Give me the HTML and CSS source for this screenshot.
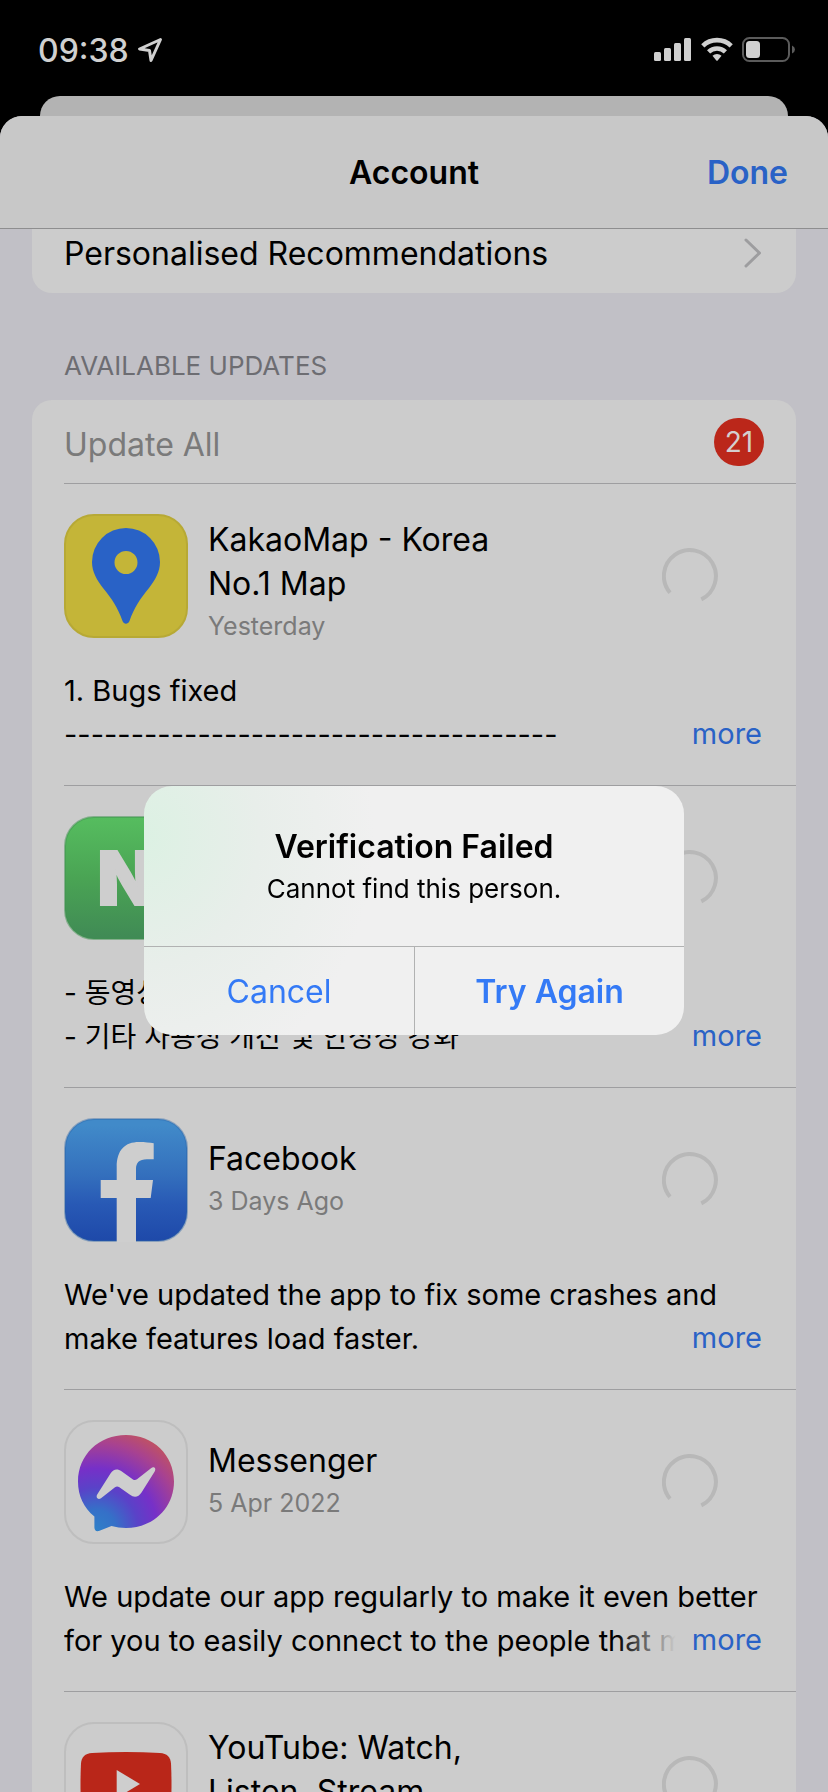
FILE: index.html
```html
<!DOCTYPE html>
<html lang="en">
<head>
<meta charset="utf-8">
<meta name="viewport" content="width=device-width, initial-scale=1">
<title>Account</title>
<link rel="stylesheet" href="styles.css">
</head>
<body>
<div class="screen">
  <div class="status">
    <div class="status-left">
      <span class="clock">09:38</span>
      <svg class="location" width="26" height="26" viewBox="0 0 26 26" aria-hidden="true"><path d="M23.500 2.500L2.500 12L12.500 13.500L14 23.500Z" fill="none" stroke="#d0d0d0" stroke-width="3" stroke-linejoin="round"/></svg>
    </div>
    <div class="status-right">
      <svg width="38" height="26" viewBox="0 0 38 26" aria-hidden="true" fill="#d0d0d0"><rect x="0" y="15" width="7" height="9" rx="1.500"/><rect x="10" y="11" width="7" height="13" rx="1.500"/><rect x="20" y="6" width="7" height="18" rx="1.500"/><rect x="30" y="1" width="7" height="23" rx="1.500"/></svg>
      <svg width="32" height="26" viewBox="0 0 32 26" aria-hidden="true"><g fill="none" stroke="#d0d0d0" stroke-width="4.600"><path d="M1.800 8.800A20.500 20.500 0 0 1 30.200 8.800"/><path d="M7.600 14.800A12.200 12.200 0 0 1 24.400 14.800"/></g><path d="M11.500 18.800A6.500 6.500 0 0 1 20.500 18.800L16.700 23.500Q16 24.200 15.300 23.500Z" fill="#d0d0d0"/></svg>
      <svg width="54" height="26" viewBox="0 0 54 26" aria-hidden="true"><rect x="1" y="1" width="46" height="23" rx="6.500" fill="none" stroke="#5b5b5b" stroke-width="2"/><rect x="4" y="4" width="14" height="17" rx="3.500" fill="#d0d0d0"/><path d="M50 8.500Q53 10 53 12.500Q53 15 50 16.500Z" fill="#5b5b5b"/></svg>
    </div>
  </div>
  <div class="back-sheet"></div>
  <div class="sheet">
    <header class="nav">
      <h1 class="nav-title">Account</h1>
      <button class="nav-done" type="button">Done</button>
    </header>
    <main class="content">
      <a class="card card-link" href="#recommendations">
        <span>Personalised Recommendations</span>
        <svg width="18" height="30" viewBox="0 0 18 30" aria-hidden="true"><path d="M2 2L15.500 15L2 28" fill="none" stroke="#9d9d9f" stroke-width="3" stroke-linecap="round" stroke-linejoin="round"/></svg>
      </a>
      <h2 class="section-title">AVAILABLE UPDATES</h2>
      <section class="card">
        <div class="update-all">
          <button class="update-all-button" type="button" disabled>Update All</button>
          <span class="badge">21</span>
        </div>
        <article class="app">
          <div class="app-head">
            <svg class="app-icon" viewBox="0 0 124 124" aria-hidden="true"><rect x="1" y="1" width="122" height="122" rx="29" fill="#c4b538" stroke="#b7a935" stroke-width="2"/><path fill-rule="evenodd" d="M28 48A34 34 0 0 1 96 48C96 58 91 66 85 74C76 85 70 94 65.500 107C64 110.500 60 110.500 58.500 107C54 94 48 85 39 74C33 66 28 58 28 48ZM50.500 48.500A11.500 11.500 0 1 0 73.500 48.500A11.500 11.500 0 1 0 50.500 48.500Z" fill="#2962c6"/></svg>
            <div class="app-info app-info-long"><h3 class="app-name">KakaoMap - Korea<br>No.1 Map</h3><p class="app-date">Yesterday</p></div>
            <svg class="spinner" viewBox="0 0 56 56" role="img" aria-label="Loading"><path d="M8 44.800A26 26 0 1 1 39.300 51.400" fill="none" stroke="#b8b8b8" stroke-width="4"/></svg>
          </div>
          <div class="notes"><p class="notes-text">1. Bugs fixed<br>-------------------------------------</p><button class="more" type="button">more</button></div>
        </article>
        <article class="app">
          <div class="app-head">
            <svg class="app-icon" viewBox="0 0 124 124" aria-hidden="true"><defs><linearGradient id="green" x2="0" y2="1"><stop stop-color="#56bd5f"/><stop offset=".5" stop-color="#4aa454"/><stop offset="1" stop-color="#408a55"/></linearGradient></defs><rect x="1" y="1" width="122" height="122" rx="29" fill="url(#green)" stroke="#3f9150" stroke-opacity=".5" stroke-width="2"/><text class="mark" x="62" y="89" text-anchor="middle">N</text></svg>
            <div class="app-info"><h3 class="app-name">NAVER</h3><p class="app-date">Yesterday</p></div>
            <svg class="spinner" viewBox="0 0 56 56" role="img" aria-label="Loading"><path d="M8 44.800A26 26 0 1 1 39.300 51.400" fill="none" stroke="#b8b8b8" stroke-width="4"/></svg>
          </div>
          <div class="notes"><p class="notes-text notes-text-ko" lang="ko">- 동영상 재생 개선<br>- 기타 사용성 개선 및 안정성 강화</p><button class="more" type="button">more</button></div>
        </article>
        <article class="app">
          <div class="app-head">
            <svg class="app-icon" viewBox="0 0 124 124" aria-hidden="true"><defs><linearGradient id="blue" x2="0" y2="1"><stop offset=".05" stop-color="#418ac9"/><stop offset=".45" stop-color="#3470bd"/><stop offset=".7" stop-color="#2859b5"/><stop offset="1" stop-color="#1e49a9"/></linearGradient></defs><rect x="1" y="1" width="122" height="122" rx="29" fill="url(#blue)" stroke="#2862a5" stroke-opacity=".4" stroke-width="2"/><path d="M52.700 124V80H36.700V62H52.700V49C52.700 32 61 24 75 24C81 24 86 24.600 89.700 25.300V41.300H83C75 41.300 72 45 72 51V62H89L86.700 80H72V124Z" fill="#cecece"/></svg>
            <div class="app-info"><h3 class="app-name">Facebook</h3><p class="app-date">3 Days Ago</p></div>
            <svg class="spinner" viewBox="0 0 56 56" role="img" aria-label="Loading"><path d="M8 44.800A26 26 0 1 1 39.300 51.400" fill="none" stroke="#b8b8b8" stroke-width="4"/></svg>
          </div>
          <div class="notes"><p class="notes-text">We've updated the app to fix some crashes and<br>make features load faster.</p><button class="more" type="button">more</button></div>
        </article>
        <article class="app">
          <div class="app-head">
            <svg class="app-icon" viewBox="0 0 124 124" aria-hidden="true"><defs><radialGradient id="chat" gradientUnits="userSpaceOnUse" cx="32" cy="110" r="112"><stop stop-color="#2f80c8"/><stop offset=".18" stop-color="#3570c8"/><stop offset=".38" stop-color="#5a42c8"/><stop offset=".55" stop-color="#7630c8"/><stop offset=".78" stop-color="#a84290"/><stop offset=".92" stop-color="#bd5068"/><stop offset="1" stop-color="#c45a58"/></radialGradient></defs><rect x="1" y="1" width="122" height="122" rx="29" fill="#cccccc" stroke="#bebebe" stroke-width="2"/><path d="M62 15C89 15 110 35 110 61.500S89 108 62 108C57 108 52 107.300 47.500 106L35.500 110.800C32.500 112 30.500 110.500 30.400 107.500V96.500C20 88 14 76 14 61.500C14 35 35 15 62 15Z" fill="url(#chat)"/><path d="M33.200 74.500L46.500 53.500C49.500 48.800 53.500 48.300 57.500 51.300L69 59.500Q71 60.800 73 59.300L87 48.200C90 46 92.500 48.500 90.700 51.500L77.500 72.500C74.500 77.300 70 77.800 66 74.800L55 67Q53 65.700 51 67.200L37 78.200C34 80.200 31.500 77.500 33.200 74.500Z" fill="#cecece"/></svg>
            <div class="app-info"><h3 class="app-name">Messenger</h3><p class="app-date">5 Apr 2022</p></div>
            <svg class="spinner" viewBox="0 0 56 56" role="img" aria-label="Loading"><path d="M8 44.800A26 26 0 1 1 39.300 51.400" fill="none" stroke="#b8b8b8" stroke-width="4"/></svg>
          </div>
          <div class="notes"><p class="notes-text">We update our app regularly to make it even better<br>for you to easily connect to the people that matter</p><button class="more" type="button">more</button></div>
        </article>
        <article class="app">
          <div class="app-head">
            <svg class="app-icon" viewBox="0 0 124 124" aria-hidden="true"><rect x="1" y="1" width="122" height="122" rx="29" fill="#cccccc" stroke="#bebebe" stroke-width="2"/><path d="M28 31Q62 29 96 31C103 31.500 106.500 35 107 41.500Q108 62 107 82.500C106.500 89 103 92.500 96 93Q62 95 28 93C21 92.500 17.500 89 17 82.500Q16 62 17 41.500C17.500 35 21 31.500 28 31Z" fill="#b92619"/><path d="M52.700 48L76 62L52.700 76Z" fill="#cecece"/></svg>
            <div class="app-info app-info-long"><h3 class="app-name">YouTube: Watch,<br>Listen, Stream</h3></div>
            <svg class="spinner" viewBox="0 0 56 56" role="img" aria-label="Loading"><path d="M8 44.800A26 26 0 1 1 39.300 51.400" fill="none" stroke="#b8b8b8" stroke-width="4"/></svg>
          </div>
        </article>
      </section>
    </main>
  </div>
  <div class="overlay">
    <div class="alert" role="alertdialog" aria-labelledby="alert-title" aria-describedby="alert-text">
      <div class="alert-body">
        <h2 class="alert-title" id="alert-title">Verification Failed</h2>
        <p class="alert-text" id="alert-text">Cannot find this person.</p>
      </div>
      <div class="alert-actions">
        <button class="alert-button" type="button">Cancel</button>
        <button class="alert-button alert-button-strong" type="button">Try Again</button>
      </div>
    </div>
  </div>
</div>
</body>
</html>
```
FILE: styles.css
```css
* { box-sizing: border-box; }
body, h1, h2, h3, p { margin: 0; }
body {
  background: #000;
  color: #000;
  font-family: Inter, "Noto Sans CJK KR", sans-serif;
  font-size: 32px;
  font-weight: 400;
}
button {
  padding: 0;
  border: 0;
  background: none;
  color: #2962c6;
  font: inherit;
}
.screen {
  display: flex;
  flex-direction: column;
  height: 100vh;
  overflow: hidden;
}
.status {
  display: flex;
  flex: none;
  justify-content: space-between;
  align-items: center;
  height: 96px;
  padding: 4px 32px 0 38px;
}
.status-left { display: flex; align-items: center; gap: 8px; }
.status-right { display: flex; align-items: center; gap: 9px; }
.clock { color: #d0d0d0; font-size: 32px; font-weight: 500; }
.back-sheet {
  flex: none;
  height: 20px;
  margin: 0 40px;
  border-radius: 20px 20px 0 0;
  background: #b3b3b3;
}
.sheet {
  display: flex;
  flex: 1;
  flex-direction: column;
  min-height: 0;
  overflow: hidden;
  border-radius: 22px 22px 0 0;
  background: #c1c0c6;
}
.nav {
  display: grid;
  flex: none;
  grid-template-columns: 1fr auto 1fr;
  align-items: center;
  height: 113px;
  padding: 0 40px;
  border-bottom: 1px solid #8e8e8f;
  background: #c8c8c8;
}
.nav-title { grid-column: 2; font-size: 32px; font-weight: 600; }
.nav-done { justify-self: end; font-weight: 600; }
.content {
  flex: 1;
  min-height: 0;
  padding: 0 32px;
  overflow: hidden;
}
.card { display: block; border-radius: 20px; background: #ccc; }
.card-link {
  display: flex;
  justify-content: space-between;
  align-items: center;
  height: 64px;
  padding: 0 34px 16px 32px;
  border-radius: 0 0 20px 20px;
  color: #000;
  text-decoration: none;
}
.section-title {
  padding: 53px 32px 14px;
  color: #6d6d72;
  font-size: 26px;
  font-weight: 400;
  line-height: 40px;
}
.update-all {
  display: flex;
  justify-content: space-between;
  align-items: center;
  height: 84px;
  margin-left: 32px;
  padding-right: 32px;
  border-bottom: 1px solid #9e9ea0;
}
.update-all-button { padding-top: 6px; color: #7a7a7a; }
.badge {
  min-width: 50px;
  border-radius: 24px;
  background: #bb271a;
  color: #d4cfcf;
  font-size: 28px;
  line-height: 48px;
  text-align: center;
}
.app {
  margin-left: 32px;
  padding: 30px 32px 28px 0;
  border-bottom: 1px solid #9e9ea0;
}
.app-head {
  display: grid;
  grid-template-rows: 124px;
  grid-template-columns: 124px 1fr 56px;
  gap: 20px;
  padding-right: 46px;
}
.app-icon { width: 124px; height: 124px; }
.mark {
  fill: #cecece;
  stroke: #cecece;
  stroke-width: 2px;
  font-size: 74px;
  font-weight: 900;
}
.app-info { padding-top: 19px; }
.app-info-long { padding-top: 4px; }
.app-name { font-size: 32px; font-weight: 400; line-height: 44px; }
.app-date { color: #7a7a7a; font-size: 25px; line-height: 40px; }
.spinner { align-self: center; width: 56px; height: 56px; }
.notes { position: relative; margin-top: 31px; }
.notes-text {
  overflow: hidden;
  font-size: 29px;
  line-height: 44px;
  white-space: nowrap;
}
.notes-text-ko { font-size: 28px; }
.more {
  position: absolute;
  right: 0;
  bottom: 0;
  padding: 0 2px 2px 76px;
  background: linear-gradient(to right, rgba(204, 204, 204, 0), #ccc 60px);
  font-size: 29px;
  line-height: 42px;
}
.overlay {
  position: fixed;
  inset: 0;
  display: flex;
  justify-content: center;
  align-items: center;
  padding-top: 29px;
}
.alert {
  width: 540px;
  overflow: hidden;
  border-radius: 28px;
  background: radial-gradient(ellipse 230px 260px at 0 20%, #dcf1e3, #e8eeea 50%, #f0f0f0);
  text-align: center;
}
.alert-body { padding: 40px 32px 36px; border-bottom: 1px solid #b1b2b2; }
.alert-title { font-size: 32px; font-weight: 600; line-height: 42px; }
.alert-text { font-size: 26px; line-height: 42px; }
.alert-actions { display: grid; grid-template-columns: 1fr 1fr; }
.alert-button { height: 88px; color: #347af6; }
.alert-button-strong { border-left: 1px solid #b1b2b2; font-weight: 600; }
```
